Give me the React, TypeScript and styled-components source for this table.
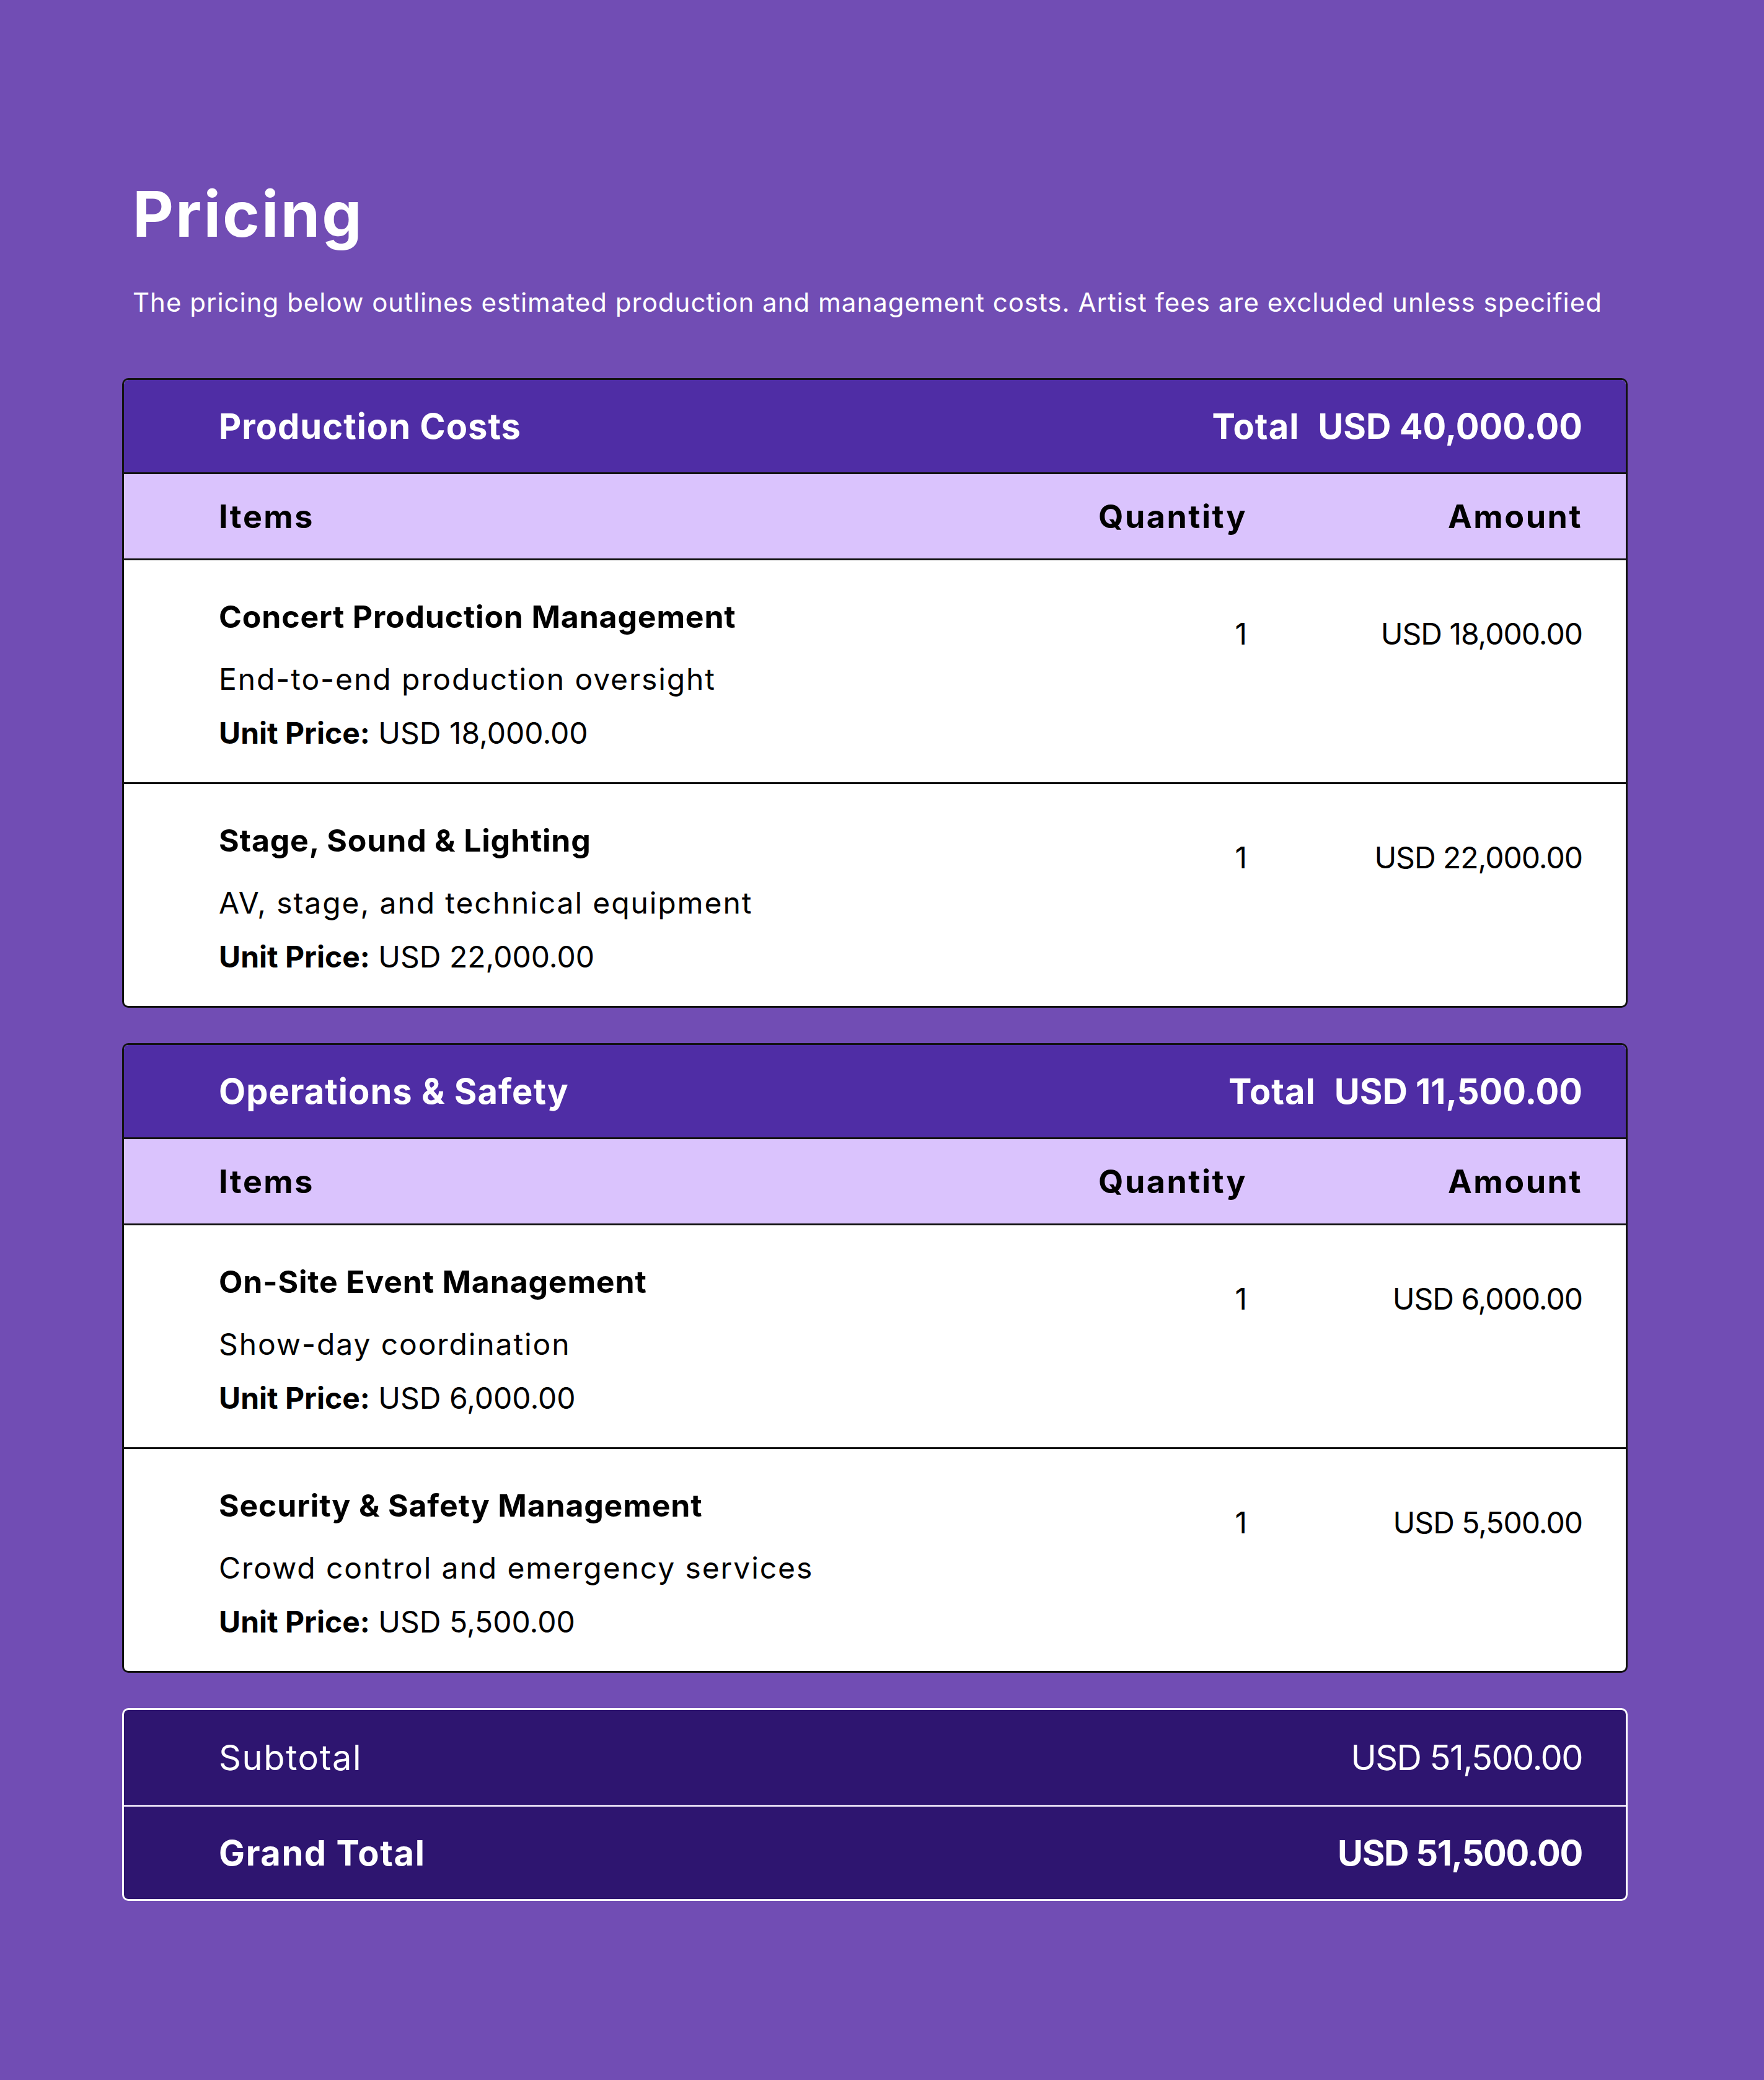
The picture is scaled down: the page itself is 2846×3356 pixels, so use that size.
import React from "react";
import styled, { createGlobalStyle } from "styled-components";

type LineItem = {
  name: string;
  description: string;
  quantity: number;
  unitPrice: number;
};

type Section = {
  title: string;
  items: LineItem[];
};

const sections: Section[] = [
  {
    title: "Production Costs",
    items: [
      {
        name: "Concert Production Management",
        description: "End-to-end production oversight",
        quantity: 1,
        unitPrice: 18000,
      },
      {
        name: "Stage, Sound & Lighting",
        description: "AV, stage, and technical equipment",
        quantity: 1,
        unitPrice: 22000,
      },
    ],
  },
  {
    title: "Operations & Safety",
    items: [
      {
        name: "On-Site Event Management",
        description: "Show-day coordination",
        quantity: 1,
        unitPrice: 6000,
      },
      {
        name: "Security & Safety Management",
        description: "Crowd control and emergency services",
        quantity: 1,
        unitPrice: 5500,
      },
    ],
  },
];

const usd = (n: number) =>
  "USD " +
  n.toLocaleString("en-US", { minimumFractionDigits: 2, maximumFractionDigits: 2 });

const GlobalStyle = createGlobalStyle`
  html, body {
    margin: 0;
    padding: 0;
    background: #714db4;
  }
  body {
    font-family: Inter, "Open Sans", "Liberation Sans", sans-serif;
    -webkit-font-smoothing: antialiased;
  }
`;

const Page = styled.div`
  min-height: 100vh;
  box-sizing: border-box;
  padding: 284px 220px 292px 197px;
  background: #714db4;
  color: #fff;
`;

const Intro = styled.header`
  padding-left: 17px;
  margin-bottom: 92px;
`;

const Title = styled.h1`
  margin: 0;
  font-size: 102px;
  line-height: 1.2;
  font-weight: 700;
  letter-spacing: 3px;
`;

const Lead = styled.p`
  margin: 53px 0 0;
  font-size: 42px;
  line-height: 1.4;
  font-weight: 400;
  letter-spacing: 1px;
`;

const Stack = styled.div`
  display: flex;
  flex-direction: column;
  gap: 57px;
`;

const Card = styled.section`
  border: 3px solid #121212;
  border-radius: 10px;
  overflow: hidden;
  background: #fff;
`;

const Band = styled.div`
  height: 149px;
  display: flex;
  align-items: center;
  justify-content: space-between;
  padding: 0 70px 0 153px;
  background: #4f2da5;
  border-bottom: 3px solid #121212;
  color: #fff;
  font-size: 56px;
  font-weight: 700;
  letter-spacing: 1px;
`;

const BandTotal = styled.div`
  display: flex;
  gap: 30px;
`;

/* money values run a touch tighter than words */
const Money = styled.span<{ $spacing?: number }>`
  letter-spacing: ${(p) => p.$spacing ?? -1}px;
`;

const Grid = styled.div`
  display: grid;
  grid-template-columns: 1fr 300px 541px;
  padding: 0 70px 0 153px;
`;

const ColHead = styled(Grid)`
  height: 136px;
  align-items: center;
  background: #dac3fd;
  border-bottom: 3px solid #121212;
  color: #000;
  font-size: 52px;
  font-weight: 700;
  letter-spacing: 2.5px;
`;

const Cell = styled.div<{ $right?: boolean }>`
  text-align: ${(p) => (p.$right ? "right" : "left")};
`;

const Row = styled(Grid)<{ $last?: boolean }>`
  height: ${(p) => (p.$last ? 358 : 361)}px;
  box-sizing: border-box;
  align-items: start;
  color: #000;
  border-bottom: ${(p) => (p.$last ? "none" : "3px solid #121212")};
`;

const ItemCell = styled.div`
  padding-top: 56px;
`;

const ItemName = styled.div`
  font-size: 50px;
  line-height: 1.4;
  font-weight: 700;
  letter-spacing: 0.8px;
`;

const ItemText = styled.div<{ $gap: number; $spacing: number }>`
  margin-top: ${(p) => p.$gap}px;
  font-size: 48px;
  line-height: 1.4;
  font-weight: 400;
  letter-spacing: ${(p) => p.$spacing}px;

  b {
    font-weight: 700;
  }
`;

const Figure = styled(Cell)`
  padding-top: 85px;
  font-size: 48px;
  line-height: 1.4;
  font-weight: 400;
`;

const Summary = styled.section`
  border: 3px solid #fff;
  border-radius: 10px;
  overflow: hidden;
  background: #2e1570;
`;

const SummaryRow = styled.div<{ $strong?: boolean }>`
  height: ${(p) => (p.$strong ? 149 : 153)}px;
  display: flex;
  align-items: center;
  justify-content: space-between;
  padding: 0 70px 0 153px;
  font-size: 56px;
  font-weight: ${(p) => (p.$strong ? 700 : 400)};
  letter-spacing: 1.6px;
  color: #fff;

  & + & {
    border-top: 3px solid #e4dcf2;
  }
`;

const SectionCard = ({ section }: { section: Section }) => {
  const total = section.items.reduce((s, i) => s + i.quantity * i.unitPrice, 0);
  return (
    <Card>
      <Band>
        <span>{section.title}</span>
        <BandTotal>
          <span>Total</span>
          <Money $spacing={0}>{usd(total)}</Money>
        </BandTotal>
      </Band>
      <ColHead>
        <Cell>Items</Cell>
        <Cell $right>Quantity</Cell>
        <Cell $right>Amount</Cell>
      </ColHead>
      {section.items.map((item, idx) => (
        <Row key={item.name} $last={idx === section.items.length - 1}>
          <ItemCell>
            <ItemName>{item.name}</ItemName>
            <ItemText $gap={32} $spacing={1.9}>
              {item.description}
            </ItemText>
            <ItemText $gap={20} $spacing={0}>
              <b>Unit Price:</b> {usd(item.unitPrice)}
            </ItemText>
          </ItemCell>
          <Figure $right>{item.quantity}</Figure>
          <Figure $right>
            <Money>{usd(item.quantity * item.unitPrice)}</Money>
          </Figure>
        </Row>
      ))}
    </Card>
  );
};

export default function App() {
  const grand = sections.reduce(
    (s, sec) => s + sec.items.reduce((a, i) => a + i.quantity * i.unitPrice, 0),
    0
  );
  return (
    <>
      <GlobalStyle />
      <Page>
        <Intro>
          <Title>Pricing</Title>
          <Lead>
            The pricing below outlines estimated production and management costs. Artist
            fees are excluded unless specified
          </Lead>
        </Intro>
        <Stack>
          {sections.map((s) => (
            <SectionCard key={s.title} section={s} />
          ))}
          <Summary>
            <SummaryRow>
              <span>Subtotal</span>
              <Money $spacing={-1.6}>{usd(grand)}</Money>
            </SummaryRow>
            <SummaryRow $strong>
              <span>Grand Total</span>
              <Money $spacing={-1.3}>{usd(grand)}</Money>
            </SummaryRow>
          </Summary>
        </Stack>
      </Page>
    </>
  );
}
